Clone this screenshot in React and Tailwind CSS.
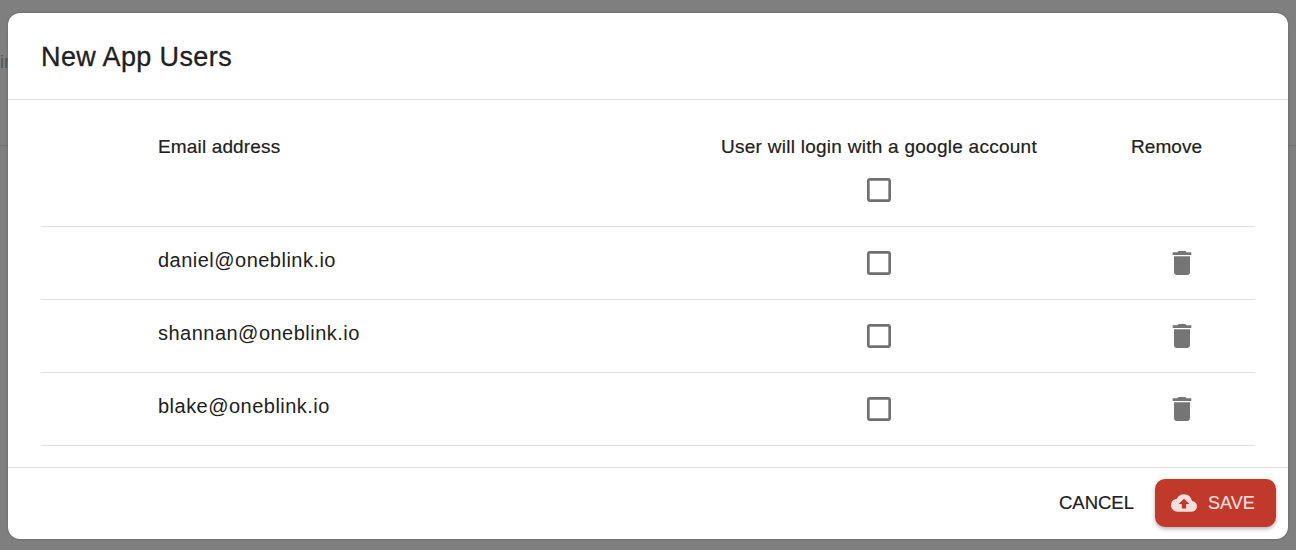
const users = ['daniel@oneblink.io', 'shannan@oneblink.io', 'blake@oneblink.io'];

const CheckboxIcon = () => (
  <svg viewBox="0 0 24 24" className="w-8 h-8 fill-[#707070]">
    <path d="M19 5v14H5V5h14m0-2H5c-1.1 0-2 .9-2 2v14c0 1.1.9 2 2 2h14c1.1 0 2-.9 2-2V5c0-1.1-.9-2-2-2z" />
  </svg>
);

const TrashIcon = () => (
  <svg viewBox="0 0 24 24" className="w-8 h-8 fill-[#757575]">
    <path d="M6 19c0 1.1.9 2 2 2h8c1.1 0 2-.9 2-2V7H6v12zM19 4h-3.5l-1-1h-5l-1 1H5v2h14V4z" />
  </svg>
);

const CloudUploadIcon = () => (
  <svg viewBox="0 0 24 24" className="w-[26px] h-[26px] fill-[#f6dedc]">
    <path d="M19.35 10.04C18.67 6.59 15.64 4 12 4 9.11 4 6.6 5.64 5.35 8.04 2.34 8.36 0 10.91 0 14c0 3.31 2.69 6 6 6h13c2.76 0 5-2.24 5-5 0-2.64-2.05-4.78-4.65-4.96zM14 13v4h-4v-4H7l5-5 5 5h-3z" />
  </svg>
);

const App = () => {
  return (
    <div className="relative h-[550px] overflow-hidden bg-[#7f7f7f] font-['Liberation_Sans',sans-serif]">
      {/* Page behind the dialog */}
      <div className="h-[146px] border-b border-[#727272]">
        <p className="pt-[49px] text-[18px] text-[#555555]">in</p>
      </div>

      <div className="absolute inset-0 px-2 pt-[13px] pb-[11px]">
        <div className="flex h-full flex-col rounded-xl bg-white shadow-[0_0_3px_rgba(0,0,0,0.25)]">
          <header className="h-[87px] border-b border-[#e0e0e0] px-[33px] pt-[27px]">
            <h2 className="text-[27px] leading-[34px] tracking-[0.38px] text-[#212121] [-webkit-text-stroke:0.3px_#212121]">New App Users</h2>
          </header>

          <div className="flex-1 px-[33px]">
            <div className="grid h-[127px] grid-cols-[664px_348px_1fr] border-b border-[#e0e0e0]">
              <div className="pl-[117px] pt-[36px] text-[19px] leading-[22px] tracking-[0.15px] text-[#212121] [-webkit-text-stroke:0.2px_#212121]">Email address</div>
              <div className="flex flex-col items-center pt-[36px]">
                <span className="whitespace-nowrap text-[19px] leading-[22px] tracking-[0.26px] text-[#212121] [-webkit-text-stroke:0.2px_#212121]">User will login with a google account</span>
                <span className="mt-[16px]"><CheckboxIcon /></span>
              </div>
              <div className="pl-[78px] pt-[36px] text-[19px] leading-[22px] tracking-[0.05px] text-[#212121] [-webkit-text-stroke:0.2px_#212121]">Remove</div>
            </div>

            {users.map((email) => (
              <div key={email} className="grid h-[73px] grid-cols-[664px_348px_1fr] items-center border-b border-[#e0e0e0]">
                <div className="pl-[117px] pb-[7px] text-[20px] leading-[26px] tracking-[0.48px] text-[#212121]">{email}</div>
                <div className="flex justify-center"><CheckboxIcon /></div>
                <div className="pl-[113px]"><TrashIcon /></div>
              </div>
            ))}
          </div>

          <footer className="flex h-[72px] items-center justify-end gap-[21px] border-t border-[#e0e0e0] pr-3 pb-[1px]">
            <button className="text-[18.5px] text-[#212121] [-webkit-text-stroke:0.2px_#212121]">CANCEL</button>
            <button className="flex h-12 w-[121px] items-center gap-[11px] rounded-[10px] bg-[#c0392b] pl-[16px] text-[18px] text-[#f6dedc] [-webkit-text-stroke:0.2px_#f6dedc] shadow-[0_2px_4px_rgba(0,0,0,0.3)]">
              <CloudUploadIcon />
              SAVE
            </button>
          </footer>
        </div>
      </div>
    </div>
  );
};

export default App;
